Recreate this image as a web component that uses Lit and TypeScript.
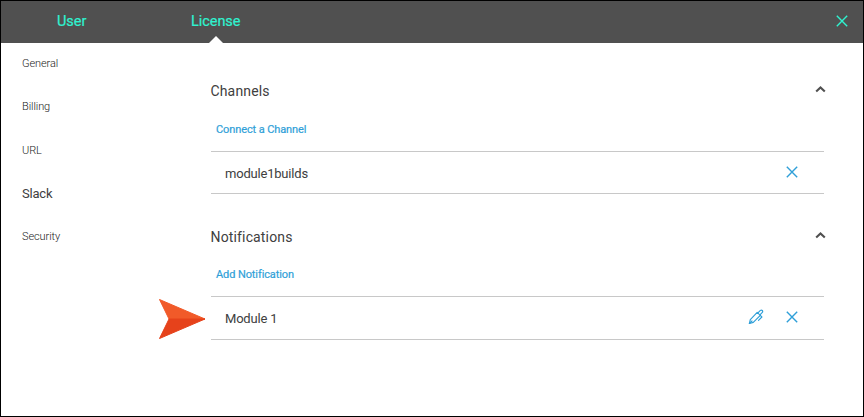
import { LitElement, html, css, svg } from "lit";
import { customElement } from "lit/decorators.js";

const cross = html`<svg class="cross" width="12" height="12" viewBox="0 0 12 12">
  <path d="M.8 .8L11.2 11.2M11.2 .8L.8 11.2" fill="none" stroke="currentColor" stroke-width="1.4" />
</svg>`;

const chevron = html`<svg class="chevron" width="11" height="8" viewBox="0 0 11 8">
  <path d="M1.2 6.6L5.5 2.5L9.8 6.6" fill="none" stroke="#505050" stroke-width="2.1" />
</svg>`;

const pen = html`<svg class="pen" width="16" height="16" viewBox="0 0 16 16">
  ${svg`<g fill="none" stroke="currentColor" stroke-width="1.15" stroke-linejoin="round" stroke-linecap="round">
    <path d="M1.4 14.5L2.3 10.6L9.2 3.3L12.3 6.4L5.3 13.4Z" />
    <path d="M10.2 3.6L12.4 1.4Q13.4 .7 14.3 1.5Q15.1 2.4 14.3 3.4L12.2 5.6" />
    <path d="M12.3 6.4L13.9 8L10.5 11.4" />
    <path d="M1.4 14.5L4 12" />
  </g>`}
</svg>`;

@customElement("app-root")
export class AppRoot extends LitElement {
  static styles = css`
    :host {
      display: flex;
      flex-direction: column;
      box-sizing: border-box;
      width: 864px;
      height: 417px;
      border: 1px solid #000;
      background: #fff;
      color: #404040;
      font-family: Roboto, sans-serif;
      overflow: hidden;
    }
    svg { display: block; }
    header {
      display: flex;
      align-items: center;
      height: 42px;
      flex: none;
      box-sizing: border-box;
      padding: 0 15.5px 0 56px;
      background: #505050;
      color: #2ff3d0;
      font-size: 14.5px;
      line-height: 41px;
    }
    .tab { width: 134px; height: 42px; position: relative; letter-spacing: -0.05px; -webkit-text-stroke: 0.2px currentColor; }
    .active::after {
      content: "";
      position: absolute;
      left: 18px;
      bottom: 0;
      border: 7px solid transparent;
      border-top: 0;
      border-bottom-color: #fff;
    }
    .close { margin-left: auto; margin-top: -2px; }
    .body { display: flex; flex: 1; }
    nav {
      width: 189px;
      padding: 1px 0 0 21px;
      color: #222;
      font-size: 11px;
      font-weight: 300;
      letter-spacing: -0.1px;
    }
    .item { height: 43.3px; line-height: 40px; }
    .current { font-size: 13px; font-weight: 400; color: #404040; letter-spacing: -0.2px; }
    main { width: 613px; padding-top: 27px; }
    .title {
      display: flex;
      justify-content: space-between;
      height: 42px;
      line-height: 42px;
      font-size: 14px;
      letter-spacing: 0.15px;
    }
    .title span { margin-left: -0.5px; }
    .title .chevron { margin: 14.5px -2px 0 0; }
    .link {
      height: 39px;
      line-height: 35px;
      padding-left: 5px;
      color: #2f9fd8;
      font-size: 11px;
      letter-spacing: -0.1px;
      -webkit-text-stroke: 0.2px currentColor;
    }
    .row {
      display: flex;
      align-items: center;
      justify-content: flex-end;
      gap: 22px;
      height: 41px;
      padding: 0 26px 0 14px;
      border: solid #c8c8c8;
      border-width: 1px 0;
      color: #2f9fd8;
    }
    .row svg { margin-bottom: 2px; }
    .name { flex: 1; color: #404040; font-size: 13px; line-height: 41px; padding-top: 2px; letter-spacing: -0.2px; }
    .second { margin-top: 22px; position: relative; }
    .second .link { height: 38px; line-height: 34px; }
    .second .row { height: 42px; }
    .second .name { padding-top: 0; }
    .pointer { position: absolute; left: -53px; bottom: 0; }
  `;

  render() {
    return html`
      <header>
        <div class="tab">User</div>
        <div class="tab active">License</div>
        <div class="close">${cross}</div>
      </header>
      <div class="body">
        <nav>
          ${["General", "Billing", "URL", "Slack", "Security"].map(
            (t) => html`<div class="item ${t === "Slack" ? "current" : ""}">${t}</div>`
          )}
        </nav>
        <main>
          <section>
            <div class="title"><span>Channels</span>${chevron}</div>
            <div class="link">Connect a Channel</div>
            <div class="row"><span class="name">module1builds</span>${cross}</div>
          </section>
          <section class="second">
            <div class="title"><span>Notifications</span>${chevron}</div>
            <div class="link">Add Notification</div>
            <div class="row"><span class="name">Module 1</span>${pen}${cross}</div>
            <svg class="pointer" width="50" height="42" viewBox="0 0 50 42">
              <path d="M1.5 1.5L47 21H11Z" fill="#f15a29" stroke="#f15a29" stroke-linejoin="round" />
              <path d="M1.5 40.5L47 21H11Z" fill="#e6421b" stroke="#e6421b" stroke-linejoin="round" />
            </svg>
          </section>
        </main>
      </div>
    `;
  }
}
